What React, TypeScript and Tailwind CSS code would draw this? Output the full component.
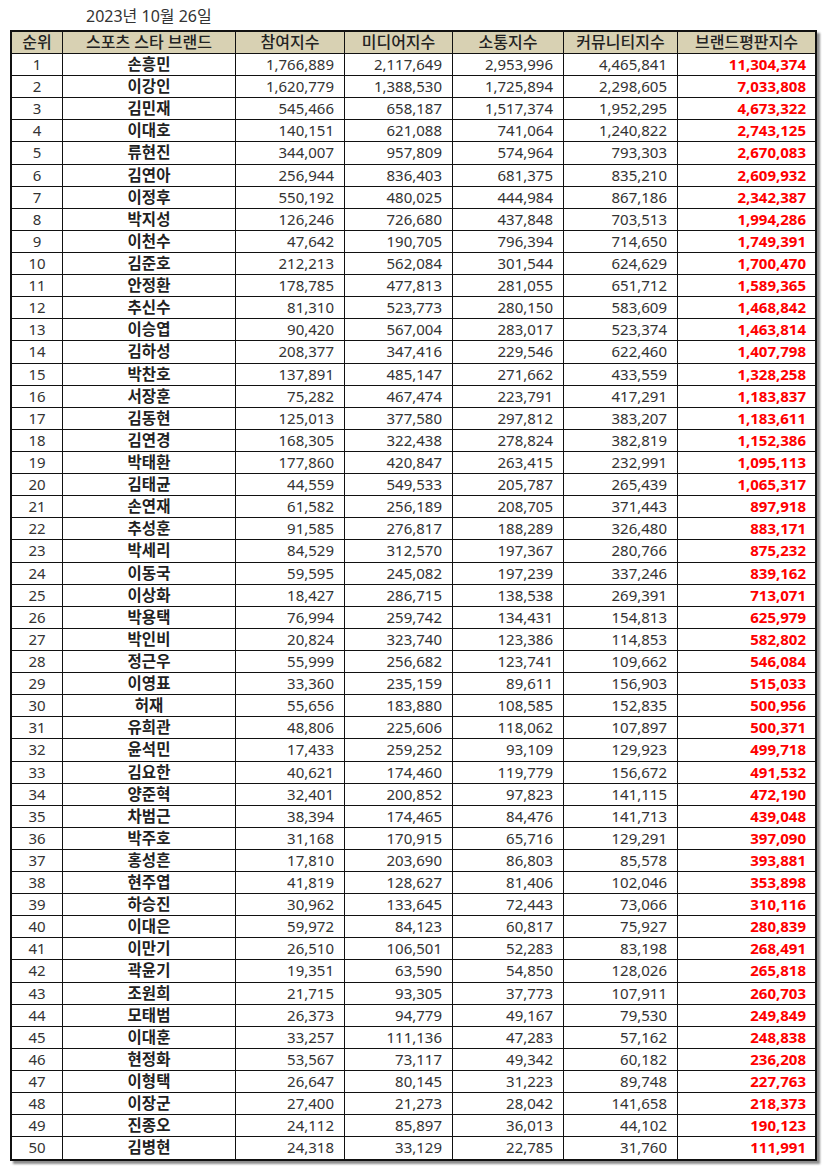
import React from "react";

const raw = `손흥민 1,766,889 2,117,649 2,953,996 4,465,841 11,304,374
이강인 1,620,779 1,388,530 1,725,894 2,298,605 7,033,808
김민재 545,466 658,187 1,517,374 1,952,295 4,673,322
이대호 140,151 621,088 741,064 1,240,822 2,743,125
류현진 344,007 957,809 574,964 793,303 2,670,083
김연아 256,944 836,403 681,375 835,210 2,609,932
이정후 550,192 480,025 444,984 867,186 2,342,387
박지성 126,246 726,680 437,848 703,513 1,994,286
이천수 47,642 190,705 796,394 714,650 1,749,391
김준호 212,213 562,084 301,544 624,629 1,700,470
안정환 178,785 477,813 281,055 651,712 1,589,365
추신수 81,310 523,773 280,150 583,609 1,468,842
이승엽 90,420 567,004 283,017 523,374 1,463,814
김하성 208,377 347,416 229,546 622,460 1,407,798
박찬호 137,891 485,147 271,662 433,559 1,328,258
서장훈 75,282 467,474 223,791 417,291 1,183,837
김동현 125,013 377,580 297,812 383,207 1,183,611
김연경 168,305 322,438 278,824 382,819 1,152,386
박태환 177,860 420,847 263,415 232,991 1,095,113
김태균 44,559 549,533 205,787 265,439 1,065,317
손연재 61,582 256,189 208,705 371,443 897,918
추성훈 91,585 276,817 188,289 326,480 883,171
박세리 84,529 312,570 197,367 280,766 875,232
이동국 59,595 245,082 197,239 337,246 839,162
이상화 18,427 286,715 138,538 269,391 713,071
박용택 76,994 259,742 134,431 154,813 625,979
박인비 20,824 323,740 123,386 114,853 582,802
정근우 55,999 256,682 123,741 109,662 546,084
이영표 33,360 235,159 89,611 156,903 515,033
허재 55,656 183,880 108,585 152,835 500,956
유희관 48,806 225,606 118,062 107,897 500,371
윤석민 17,433 259,252 93,109 129,923 499,718
김요한 40,621 174,460 119,779 156,672 491,532
양준혁 32,401 200,852 97,823 141,115 472,190
차범근 38,394 174,465 84,476 141,713 439,048
박주호 31,168 170,915 65,716 129,291 397,090
홍성흔 17,810 203,690 86,803 85,578 393,881
현주엽 41,819 128,627 81,406 102,046 353,898
하승진 30,962 133,645 72,443 73,066 310,116
이대은 59,972 84,123 60,817 75,927 280,839
이만기 26,510 106,501 52,283 83,198 268,491
곽윤기 19,351 63,590 54,850 128,026 265,818
조원희 21,715 93,305 37,773 107,911 260,703
모태범 26,373 94,779 49,167 79,530 249,849
이대훈 33,257 111,136 47,283 57,162 248,838
현정화 53,567 73,117 49,342 60,182 236,208
이형택 26,647 80,145 31,223 89,748 227,763
이장군 27,400 21,273 28,042 141,658 218,373
진종오 24,112 85,897 36,013 44,102 190,123
김병현 24,318 33,129 22,785 31,760 111,991`;

const rows = raw.split("\n").map((l) => l.trim().split(/\s+/));

const headers = ["순위", "스포츠 스타 브랜드", "참여지수", "미디어지수", "소통지수", "커뮤니티지수", "브랜드평판지수"];

export default function App() {
  return (
    <div
      className="w-[830px] min-h-[1171px] bg-white text-[#2a2a2a]"
      style={{ fontFamily: '"Noto Sans", "Noto Sans CJK KR", sans-serif' }}
    >
      <div className="h-[30px] pl-[86px] pt-[6px] text-[16px] leading-[21px] text-[#333]">2023년 10월 26일</div>
      <div className="ml-[10px] w-[807px] border-2 border-[#111] shadow-[3px_3px_2px_rgba(0,0,0,0.45)]">
        <div className="flex h-[22px] border-b border-[#111] bg-[#d8d1b3] text-[16px] leading-[21px] font-medium text-[#222]">
          <div className="w-[51px] shrink-0 border-r border-[#111] text-center">{headers[0]}</div>
          <div className="w-[173px] shrink-0 border-r border-[#111] text-center">{headers[1]}</div>
          <div className="w-[109px] shrink-0 border-r border-[#111] text-center">{headers[2]}</div>
          <div className="w-[108px] shrink-0 border-r border-[#111] text-center">{headers[3]}</div>
          <div className="w-[111px] shrink-0 border-r border-[#111] text-center">{headers[4]}</div>
          <div className="w-[114px] shrink-0 border-r border-[#111] text-center">{headers[5]}</div>
          <div className="w-[137px] shrink-0 text-center">{headers[6]}</div>
        </div>
        {rows.map((r, i) => (
          <div
            key={i}
            className={
              "flex h-[22.12px] text-[15px] leading-[21px] " +
              (i < rows.length - 1 ? "border-b border-[#111]" : "")
            }
          >
            <div className="w-[51px] shrink-0 border-r border-[#111] text-center text-[#333]">{i + 1}</div>
            <div className="w-[173px] shrink-0 border-r border-[#111] text-center text-[15.5px] font-bold text-[#222]">{r[0]}</div>
            <div className="w-[109px] shrink-0 border-r border-[#111] pr-[10px] text-right text-[#333]">{r[1]}</div>
            <div className="w-[108px] shrink-0 border-r border-[#111] pr-[10px] text-right text-[#333]">{r[2]}</div>
            <div className="w-[111px] shrink-0 border-r border-[#111] pr-[10px] text-right text-[#333]">{r[3]}</div>
            <div className="w-[114px] shrink-0 border-r border-[#111] pr-[10px] text-right text-[#333]">{r[4]}</div>
            <div className="w-[137px] shrink-0 pr-[9px] text-right font-bold text-[#ff0000]">{r[5]}</div>
          </div>
        ))}
      </div>
    </div>
  );
}
